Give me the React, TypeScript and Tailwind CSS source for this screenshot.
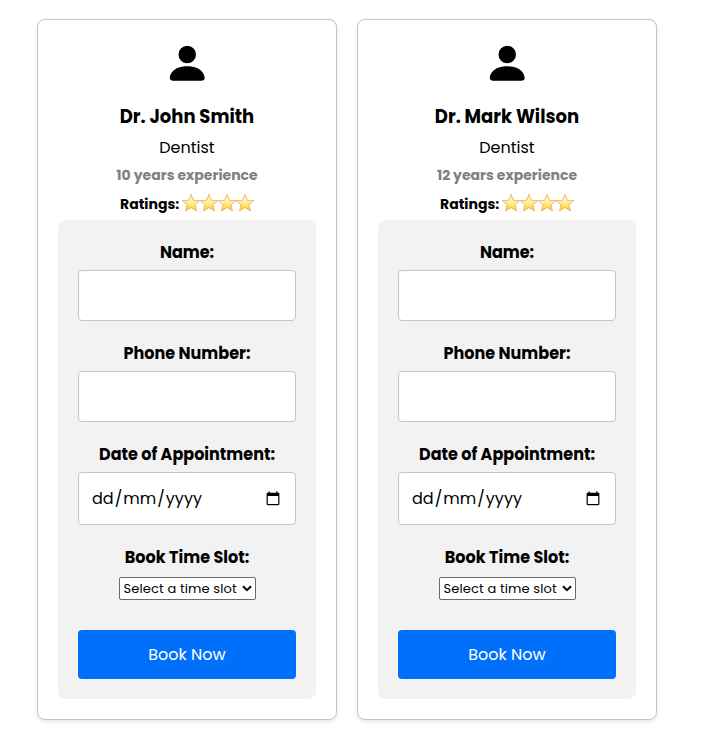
import { BsPersonFill } from "react-icons/bs";

type Doctor = { name: string; experience: string };

const doctors: Doctor[] = [
  { name: "Dr. John Smith", experience: "10 years experience" },
  { name: "Dr. Mark Wilson", experience: "12 years experience" },
];

function Star() {
  return (
    <svg viewBox="0 0 20 20" className="-mx-px h-5 w-5 shrink-0">
      <defs>
        <linearGradient id="gold" x1="0" y1="0" x2="0" y2="1">
          <stop offset="0" stopColor="#fff3b8" />
          <stop offset="0.45" stopColor="#fff2b0" />
          <stop offset="0.75" stopColor="#ffdf50" />
          <stop offset="1" stopColor="#ffb818" />
        </linearGradient>
      </defs>
      <path
        d="M10 1.3 12.4 7.3 18.8 7.7 13.9 11.8 15.5 18 10 14.6 4.5 18 6.1 11.8 1.2 7.7 7.6 7.3Z"
        fill="url(#gold)"
        stroke="#eda958"
        strokeWidth="0.8"
        strokeLinejoin="round"
      />
    </svg>
  );
}

function CalendarIcon() {
  return (
    <svg viewBox="0 0 14 15" className="h-[15px] w-[14px]">
      <path
        d="M2.5 0.5h1.4v1.3h6.2V0.5h1.4v1.3h.7c.7 0 1.200.5 1.200 1.200v10c0 .7-.5 1.200-1.200 1.200H1.800C1.100 14.200.6 13.700.6 13V3c0-.7.5-1.200 1.200-1.200h.7ZM1.800 4.900v8.100h10.400V4.900Z"
        fill="#000"
        fillRule="evenodd"
      />
    </svg>
  );
}

function Label({ text }: { text: string }) {
  return (
    <label className="flex h-6 items-center justify-center whitespace-nowrap pt-px text-[16px] leading-6 font-bold">
      <span className="scale-y-[1.06]">{text}</span>
    </label>
  );
}

function Field({ label }: { label: string }) {
  return (
    <div className="mb-5">
      <Label text={label} />
      <input className="mt-1.5 block h-[51px] w-full rounded border border-[#c4c4c4] bg-white px-3 text-base outline-none" />
    </div>
  );
}

function DoctorCard({ doctor }: { doctor: Doctor }) {
  return (
    <article className="h-[701px] w-[300px] rounded-lg border border-[#c4c4c4] bg-white p-5 text-center shadow-[0_2px_4px_rgba(0,0,0,0.1)]">
      <div className="flex h-[63px] justify-center">
        <BsPersonFill className="mr-[0.5px] h-[46.5px] w-[46.5px]" />
      </div>
      <h3 className="flex h-[27px] items-center justify-center whitespace-nowrap text-[18px] font-bold">
        <span className="scale-y-[1.04]">{doctor.name}</span>
      </h3>
      <p className="flex h-[35px] items-center justify-center text-[16px]">Dentist</p>
      <p className="flex h-5 items-center justify-center whitespace-nowrap text-[14px] font-bold text-[#808080]">
        {doctor.experience}
      </p>
      <div className="mt-[3px] flex h-8 items-center justify-center whitespace-nowrap text-[14px] font-bold">
        <span className="mr-[3px] w-[59px] text-left">Ratings:</span>
        <span className="flex pb-0.5">
          <Star />
          <Star />
          <Star />
          <Star />
        </span>
      </div>
      <form className="rounded-lg bg-[#f2f2f2] p-5">
        <Field label="Name:" />
        <Field label="Phone Number:" />
        <Label text="Date of Appointment:" />
        <div className="mt-1.5 mb-5 flex h-[53px] items-center justify-between rounded border border-[#c4c4c4] bg-white pr-[15px] pl-[13px] text-[16px]">
          <span>
            dd<span className="mx-px">/</span>mm<span className="mx-px">/</span>yyyy
          </span>
          <CalendarIcon />
        </div>
        <Label text="Book Time Slot:" />
        <button type="button" className="mx-auto mt-2 flex h-[23px] w-[137px] items-center justify-between rounded-[2px] border border-[#6b6b6b] bg-white pr-[3px] pl-1 text-[13px] tracking-[0.12px] whitespace-nowrap">
          <span>Select a time slot</span>
          <svg viewBox="0 0 10 7" className="h-[7px] w-[10px]">
            <path d="M1 1.2 5 5.2 9 1.2" fill="none" stroke="#000" strokeWidth="2" />
          </svg>
        </button>
        <button type="button" className="mt-[30px] flex h-[49px] w-full items-center justify-center rounded bg-[#0070fa] text-[16px] text-white">
          Book Now
        </button>
      </form>
    </article>
  );
}

export default function App() {
  return (
    <main className="flex min-h-[736px] gap-5 bg-white pt-[19px] pl-[37px] font-[Poppins,Inter,sans-serif] text-black">
      {doctors.map((doctor) => (
        <DoctorCard key={doctor.name} doctor={doctor} />
      ))}
    </main>
  );
}
